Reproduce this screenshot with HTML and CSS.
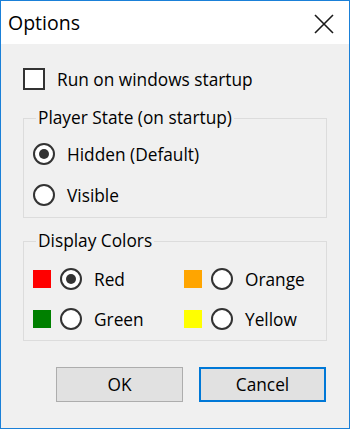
FILE: index.html
```html
<!DOCTYPE html>
<html lang="en">
<head>
    <meta charset="UTF-8">
    <meta name="viewport" content="width=device-width, initial-scale=1.0">
    <title>Options</title>
    <link rel="stylesheet" href="styles.css">
</head>
<body>
    <div class="window">
        <div class="titlebar">
            <span class="title">Options</span>
            <span class="close">
                <svg width="20" height="20" viewBox="0 0 20 20"><path d="M1 1 L19 19 M19 1 L1 19" stroke="#1a1a1a" stroke-width="1.6" fill="none"/></svg>
            </span>
        </div>

        <div class="content">
            <div class="check-row">
                <span class="checkbox"></span>
                <span>Run on windows startup</span>
            </div>

            <fieldset class="group state">
                <legend>Player State (on startup)</legend>
                <div class="option">
                    <span class="radio checked"></span>
                    <span>Hidden (Default)</span>
                </div>
                <div class="option">
                    <span class="radio"></span>
                    <span>Visible</span>
                </div>
            </fieldset>

            <fieldset class="group colors">
                <legend>Display Colors</legend>
                <div class="color-grid">
                    <div class="option">
                        <span class="swatch red"></span>
                        <span class="radio checked"></span>
                        <span>Red</span>
                    </div>
                    <div class="option">
                        <span class="swatch orange"></span>
                        <span class="radio"></span>
                        <span>Orange</span>
                    </div>
                    <div class="option">
                        <span class="swatch green"></span>
                        <span class="radio"></span>
                        <span>Green</span>
                    </div>
                    <div class="option">
                        <span class="swatch yellow"></span>
                        <span class="radio"></span>
                        <span>Yellow</span>
                    </div>
                </div>
            </fieldset>

            <div class="buttons">
                <span class="btn">OK</span>
                <span class="btn default">Cancel</span>
            </div>
        </div>
    </div>
</body>
</html>
```

FILE: styles.css
```css
body {
    margin: 0;
    padding: 0;
    font-family: "Open Sans", "Noto Sans", sans-serif;
    font-size: 17.3px;
    color: #000;
}

.window {
    width: 350px;
    height: 429px;
    box-sizing: border-box;
    border: 1px solid #1a80d8;
    display: flex;
    flex-direction: column;
    overflow: hidden;
}

.titlebar {
    height: 43px;
    background: #fff;
    display: flex;
    align-items: center;
    justify-content: space-between;
    padding: 0 15px 0 7px;
    flex-shrink: 0;
}

.title {
    font-size: 19.5px;
}

.close {
    display: flex;
    margin-top: 2px;
}

.content {
    flex: 1;
    background: #f0f0f0;
    padding: 24px 22px 0 22px;
}

.check-row,
.option {
    display: flex;
    align-items: center;
    height: 22px;
    white-space: nowrap;
}

.checkbox {
    width: 22px;
    height: 22px;
    box-sizing: border-box;
    border: 2px solid #333;
    background: #fff;
    margin-right: 12px;
}

.group {
    margin: 17px 0 0 0;
    border: 1px solid #dcdcdc;
    padding: 0 9px 11px 9px;
    min-width: 0;
}

.group legend {
    padding: 0 2px;
    margin-left: 3px;
    line-height: 22px;
}

.state .option:first-of-type {
    margin-top: 14px;
}

.state .option + .option {
    margin-top: 19px;
}

.radio {
    width: 22px;
    height: 22px;
    box-sizing: border-box;
    border: 2px solid #333;
    border-radius: 50%;
    background: #fff;
    margin-right: 12px;
    display: flex;
    align-items: center;
    justify-content: center;
    flex-shrink: 0;
}

.radio.checked::after {
    content: "";
    width: 10px;
    height: 10px;
    border-radius: 50%;
    background: #333;
}

.colors {
    margin-top: 12px;
    padding-bottom: 10px;
}

.color-grid {
    display: grid;
    grid-template-columns: 151px 1fr;
    row-gap: 18px;
    margin-top: 16px;
}

.swatch {
    width: 18px;
    height: 18px;
    margin-right: 9px;
    flex-shrink: 0;
}

.swatch.red { background: #ff0000; }
.swatch.orange { background: #ffa500; }
.swatch.green { background: #008000; }
.swatch.yellow { background: #ffff00; }

.buttons {
    display: flex;
    justify-content: flex-end;
    gap: 16px;
    margin-top: 26px;
    padding-right: 1px;
}

.btn {
    width: 127px;
    height: 35px;
    box-sizing: border-box;
    border: 1px solid #adadad;
    background: #e1e1e1;
    display: flex;
    align-items: center;
    justify-content: center;
}

.btn.default {
    border: 2px solid #0078d7;
}
```
